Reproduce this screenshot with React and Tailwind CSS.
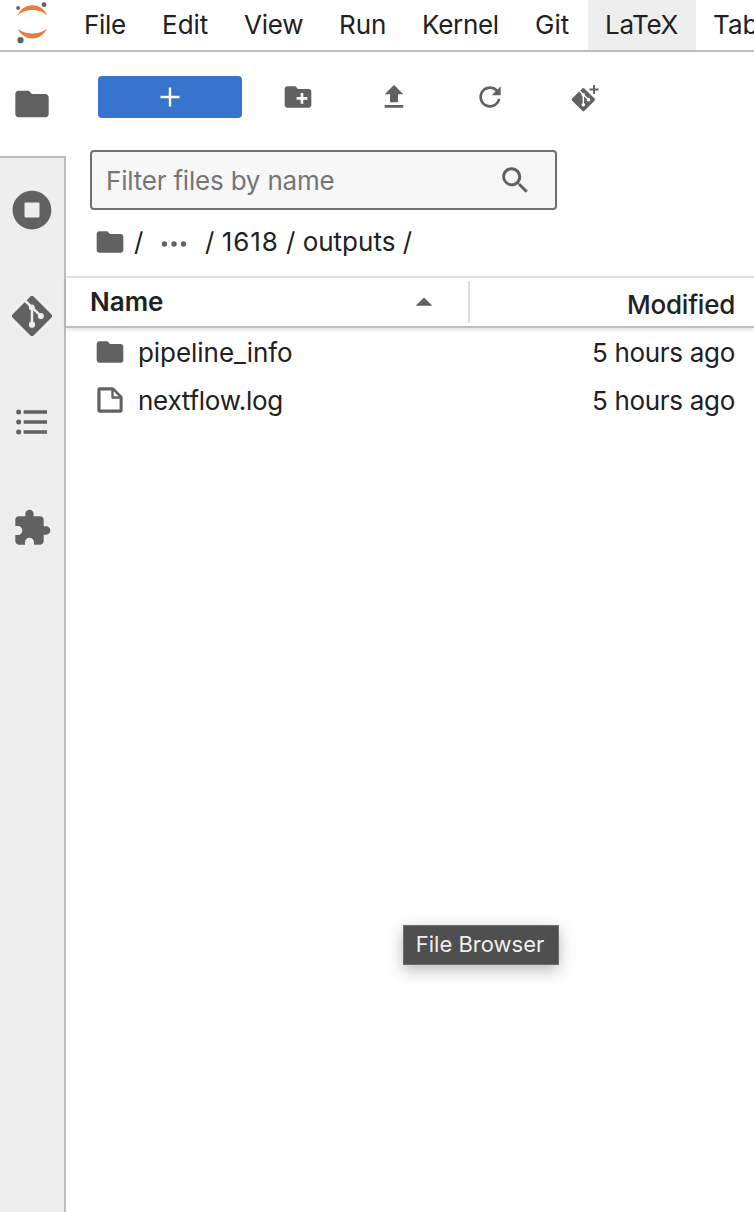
const FOLDER =
  'M10 4H4c-1.1 0-1.99.9-1.99 2L2 18c0 1.1.9 2 2 2h16c1.1 0 2-.9 2-2V8c0-1.1-.9-2-2-2h-8l-2-2z';
const RUNNING =
  'M256 8C119 8 8 119 8 256s111 248 248 248 248-111 248-248S393 8 256 8zm96 328c0 8.8-7.2 16-16 16H176c-8.8 0-16-7.2-16-16V176c0-8.8 7.2-16 16-16h160c8.8 0 16 7.2 16 16v160z';
const TOC =
  'M7,5H21V7H7V5M7,13V11H21V13H7M4,4.5A1.5,1.5 0 0,1 5.5,6A1.5,1.5 0 0,1 4,7.5A1.5,1.5 0 0,1 2.5,6A1.5,1.5 0 0,1 4,4.5M4,10.5A1.5,1.5 0 0,1 5.5,12A1.5,1.5 0 0,1 4,13.5A1.5,1.5 0 0,1 2.5,12A1.5,1.5 0 0,1 4,10.5M7,19V17H21V19H7M4,16.5A1.5,1.5 0 0,1 5.5,18A1.5,1.5 0 0,1 4,19.5A1.5,1.5 0 0,1 2.5,18A1.5,1.5 0 0,1 4,16.5Z';
const EXTENSION =
  'M20.5 11H19V7c0-1.1-.9-2-2-2h-4V3.5C13 2.12 11.88 1 10.5 1S8 2.12 8 3.5V5H4c-1.1 0-1.99.9-1.99 2v3.8H3.5c1.49 0 2.7 1.21 2.7 2.7s-1.21 2.7-2.7 2.7H2V20c0 1.1.9 2 2 2h3.8v-1.5c0-1.49 1.21-2.7 2.7-2.7 1.49 0 2.7 1.21 2.7 2.7V22H17c1.1 0 2-.9 2-2v-4h1.5c1.38 0 2.5-1.12 2.5-2.5S21.88 11 20.5 11z';
const NEW_FOLDER =
  'M20 6h-8l-2-2H4c-1.11 0-1.99.89-1.99 2L2 18c0 1.11.89 2 2 2h16c1.11 0 2-.89 2-2V8c0-1.11-.89-2-2-2zm-1 8h-3v3h-2v-3h-3v-2h3V9h2v3h3v2z';
const UPLOAD = 'M9 16h6v-6h4l-7-7-7 7h4zm-4 2h14v2H5z';
const REFRESH =
  'M9 13.5c-2.49 0-4.5-2.01-4.5-4.5S6.51 4.5 9 4.5c1.24 0 2.36.52 3.17 1.33L10 8h5V3l-1.76 1.76C12.15 3.68 10.66 3 9 3 5.69 3 3.01 5.69 3.01 9S5.69 15 9 15c2.97 0 5.43-2.16 5.9-5h-1.52c-.46 2.01-2.24 3.5-4.38 3.5z';
const SEARCH =
  'M12.1,10.9h-0.7l-0.2-0.2c0.8-0.9,1.3-2.2,1.3-3.5c0-3-2.4-5.4-5.4-5.4S1.8,4.2,1.8,7.1s2.4,5.4,5.4,5.4c1.3,0,2.5-0.5,3.5-1.3l0.2,0.2v0.7l4.1,4.1l1.2-1.2L12.1,10.9z M7.1,10.9c-2.1,0-3.7-1.7-3.7-3.7s1.7-3.7,3.7-3.7s3.7,1.7,3.7,3.7S9.2,10.9,7.1,10.9z';
const FILE =
  'M19.3 8.2l-5.5-5.5c-.3-.3-.7-.5-1.2-.5H3.9c-.8.1-1.6.9-1.6 1.8v14.1c0 .9.7 1.6 1.6 1.6h14.2c.9 0 1.6-.7 1.6-1.6V9.4c.1-.5-.1-.9-.4-1.2zm-5.8-3.3l3.4 3.6h-3.4V4.9zm3.9 12.7H4.7c-.1 0-.2 0-.2-.2V4.7c0-.2.1-.3.2-.3h7.2v4.4s0 .8.3 1.1c.3.3 1.1.3 1.1.3h4.3v7.2s-.1.2-.2.2z';

function Icon({ d, box = 24, className = 'size-8' }) {
  return (
    <svg viewBox={`0 0 ${box} ${box}`} className={`shrink-0 fill-[#616161] ${className}`} aria-hidden="true">
      <path d={d} />
    </svg>
  );
}

// Git diamond with its branch drawn in the colour of the surface behind it.
function GitMark({ surface, transform }) {
  return (
    <g transform={transform}>
      <path
        d="M10.900.450a1.550 1.550 0 0 1 2.200 0L23.550 10.900a1.550 1.550 0 0 1 0 2.200L13.100 23.550a1.550 1.550 0 0 1-2.200 0L.450 13.100a1.550 1.550 0 0 1 0-2.200z"
        fill="#616161"
      />
      <path d="M7.500 2.400L12 6.900v10.300M12 6.900l5.300 5" fill="none" stroke={surface} strokeWidth="1.500" />
      <g fill={surface}>
        <circle cx="11.900" cy="6.900" r="1.750" />
        <circle cx="12" cy="17.200" r="1.850" />
        <circle cx="17.300" cy="12" r="1.850" />
      </g>
    </g>
  );
}

function Logo() {
  return (
    <svg viewBox="0 0 66 50" className="h-[50px] w-[66px] shrink-0" aria-hidden="true">
      <g fill="#e67f3c">
        <path d="M17.7 15.6C20 9.5 25.5 5.3 32.4 5.3S44.8 9.5 47.1 15.6C44 12.2 38.5 10 32.4 10S20.8 12.2 17.7 15.6z" />
        <path d="M17.7 28.2C20.8 31.4 26.3 33.400 32.400 33.400S44 31.400 47.100 28.200C44.800 34.200 39.300 38.400 32.400 38.400S20 34.200 17.700 28.200z" />
      </g>
      <g fill="#616161">
        <circle cx="18.100" cy="8" r="1.900" />
        <circle cx="44" cy="4.700" r="2.400" />
        <circle cx="20.500" cy="40.200" r="3.100" />
      </g>
    </svg>
  );
}

const MENUS = [
  ['File', 'w-[78px] tracking-[-0.3px]'],
  ['Edit', 'w-[83px]'],
  ['View', 'w-[94px] pl-[17px] tracking-[-0.2px]'],
  ['Run', 'w-[83px]'],
  ['Kernel', 'w-[113px] tracking-[-0.3px]'],
  ['Git', 'w-[71px]'],
  ['LaTeX', 'w-[108px] bg-[#eeeeee] pl-[17px] tracking-[-0.3px]'],
  ['Tabs', 'w-[90px] pl-[17px]'],
];

const TABS = [
  [RUNNING, 512],
  [null, 24],
  [TOC, 24],
  [EXTENSION, 24],
];

const ROWS = [
  [FOLDER, 24, 'pipeline_info', 'tracking-[-0.05px]', '5 hours ago'],
  [FILE, 22, 'nextflow.log', 'tracking-[-0.27px]', '5 hours ago'],
];

export default function App() {
  return (
    <div className="relative flex h-[1212px] w-[754px] flex-col overflow-hidden bg-white font-['Inter',sans-serif] text-[26px] leading-[32px] text-[#212121]">
      <header className="flex h-[52px] shrink-0 border-b-2 border-[#bdbdbd]">
        <Logo />
        <nav className="flex">
          {MENUS.map(([label, cls]) => (
            <div key={label} className={`flex shrink-0 items-center ${cls.includes('pl-') ? '' : 'pl-[18px]'} ${cls}`}>
              {label}
            </div>
          ))}
        </nav>
      </header>

      <div className="flex min-h-0 flex-1">
        <aside className="flex w-[66px] shrink-0 flex-col">
          <div className="flex h-[104px] items-center pl-3">
            <Icon d={FOLDER} className="size-10" />
          </div>
          <div className="flex flex-1 flex-col gap-[66px] border-t-2 border-r-2 border-[#bdbdbd] bg-[#eeeeee] pt-8 pl-3">
            {TABS.map(([d, box], i) =>
              d ? (
                <Icon key={i} d={d} box={box} className="size-10" />
              ) : (
                <svg key={i} viewBox="0 0 24 24" className="size-10 shrink-0" aria-hidden="true">
                  <GitMark surface="#eeeeee" />
                </svg>
              ),
            )}
          </div>
        </aside>

        <main className="flex min-w-0 flex-1 flex-col">
          <div className="flex items-center pt-6 pl-8">
            <button className="flex h-[42px] w-36 items-center justify-center rounded-[4px] bg-[#3873cd]">
              <svg viewBox="0 0 20 20" className="size-5" aria-hidden="true">
                <path d="M10 .5v19M.5 10h19" stroke="#fff" strokeWidth="2.4" />
              </svg>
            </button>
            <div className="flex items-center gap-16 pl-10">
              <Icon d={NEW_FOLDER} />
              <Icon d={UPLOAD} />
              <Icon d={REFRESH} box={18} />
              <svg viewBox="0 0 32 32" className="size-8" aria-hidden="true">
                <GitMark surface="#ffffff" transform="translate(1.700 7) scale(.97)" />
                <path d="M24 4v9M19.500 8.500h9" stroke="#616161" strokeWidth="1.900" />
              </svg>
            </div>
          </div>

          <div className="mt-8 ml-6 flex h-[60px] w-[467px] items-center justify-between rounded-[4px] border-2 border-[#707070] bg-[#f7f7f7] pr-[24px] pl-[14px]">
            <span className="pt-[2px] tracking-[-0.2px] text-[#757575]">Filter files by name</span>
            <Icon d={SEARCH} box={18} />
          </div>

          <div className="flex h-[66px] items-center pb-[2px] pl-7">
            <Icon d={FOLDER} />
            <span className="w-[35px] pl-[8px]">/</span>
            <svg viewBox="0 0 26 8" className="mt-[3px] h-2 w-[26px] fill-[#616161]" aria-hidden="true">
              <circle cx="3.500" cy="4" r="2.700" />
              <circle cx="13" cy="4" r="2.700" />
              <circle cx="22.500" cy="4" r="2.700" />
            </svg>
            <span className="flex pl-[18px] whitespace-pre">
              <span>/ </span>
              <span className="tracking-[0.9px]">1618</span>
              <span> / outputs /</span>
            </span>
          </div>

          <div className="flex h-[52px] shrink-0 border-y-2 border-t-[#e0e0e0] border-b-[#bdbdbd] font-semibold shadow-[0_2px_4px_rgba(0,0,0,0.12)]">
            <div className="flex w-[402px] items-center justify-between pr-[35px] pl-6">
              <span>Name</span>
              <svg viewBox="0 0 18 9" className="mb-[2px] h-[9px] w-[18px] fill-[#616161]" aria-hidden="true">
                <path d="M.700 8.800L9 .500l8.300 8.300z" />
              </svg>
            </div>
            <div className="my-[3px] w-0.5 bg-[#e0e0e0]" />
            <div className="flex flex-1 items-center justify-end pt-[6px] pr-[19px] font-medium tracking-[-0.25px]">
              Modified
            </div>
          </div>

          {ROWS.map(([d, box, name, tracking, time]) => (
            <div key={name} className="flex h-12 items-center pr-[19px] pl-7">
              <Icon d={d} box={box} />
              <span className={`flex-1 pt-[2px] pl-3 ${tracking}`}>{name}</span>
              <span className="pt-[2px] tracking-[-0.3px]">{time}</span>
            </div>
          ))}
        </main>
      </div>

      <div className="absolute top-[925px] left-[403px] flex h-10 w-[156px] items-center justify-center border border-[#6e6e6e] bg-[#4f4f4f] pr-[2px] pb-[2px] text-[22px] text-[#eeeeee] shadow-[0_5px_16px_rgba(0,0,0,0.28)]">
        File Browser
      </div>
    </div>
  );
}
